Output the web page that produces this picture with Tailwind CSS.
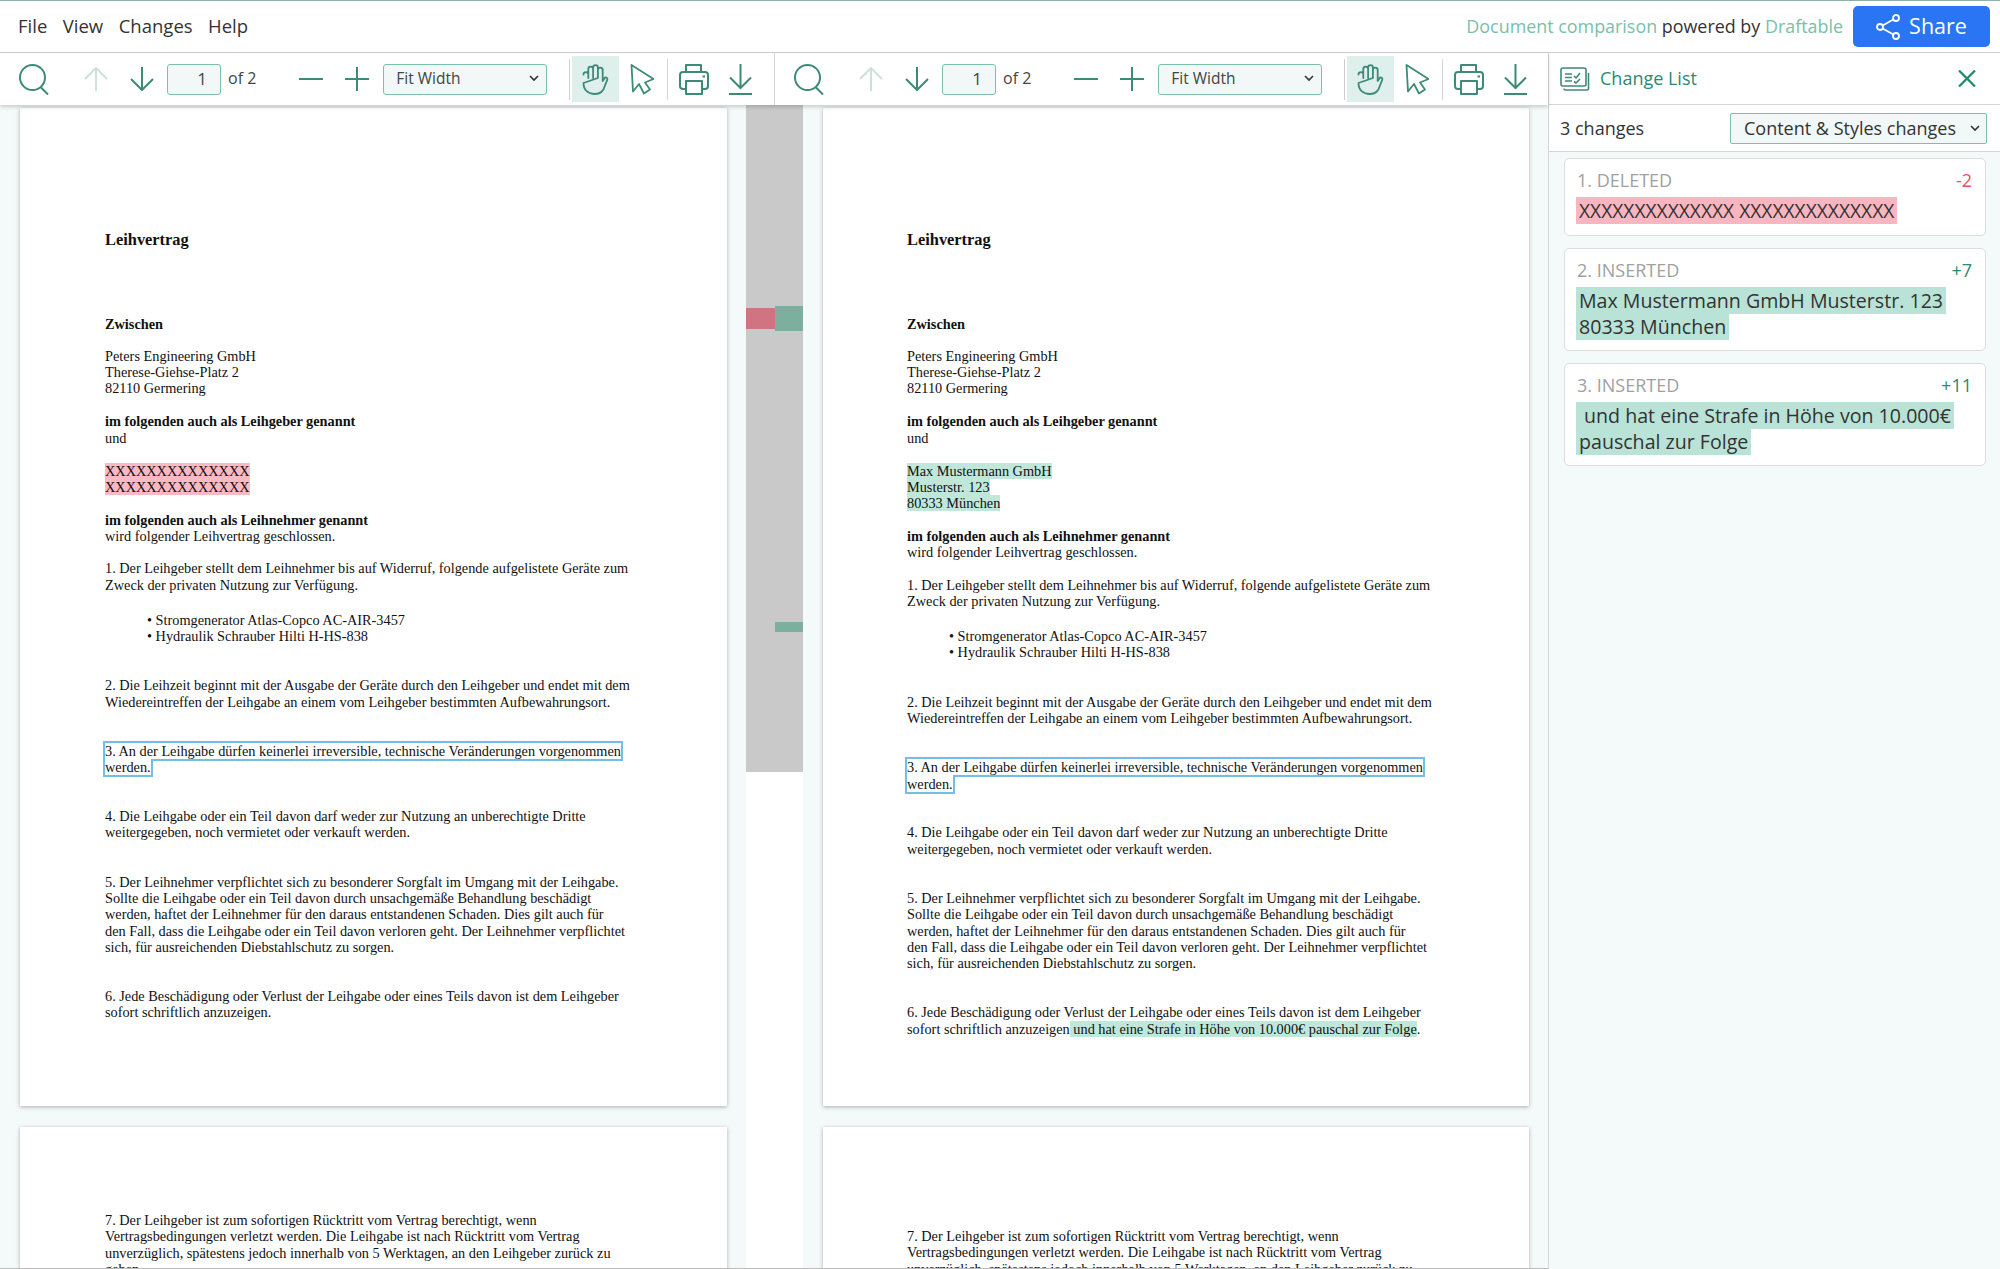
<!DOCTYPE html>
<html>
<head>
<meta charset="utf-8">
<title>Draftable</title>
<script src="https://cdn.jsdelivr.net/npm/@tailwindcss/browser@4"></script>
</head>
<body class="bg-white">
<div class="w-[2000px] h-[1269px] overflow-hidden flex flex-col font-['Open_Sans',sans-serif] text-[#333] border-t border-[#8fb0a8] relative">

  <!-- Menu bar -->
  <div class="h-[51px] shrink-0 flex items-center border-b border-[#cfcfcf] box-content pr-[10px]">
    <div class="flex gap-[15.5px] pl-[18px] pb-[1px] text-[18.5px]">
      <span>File</span><span>View</span><span>Changes</span><span>Help</span>
    </div>
    <div class="ml-auto text-[17.9px] mr-[10px]">
      <span class="text-[#79c0a9]">Document comparison</span> powered by <span class="text-[#79c0a9]">Draftable</span>
    </div>
    <button class="w-[137px] h-[41px] rounded-[5px] bg-[#2a75f3] text-white text-[21.5px] flex items-center justify-center gap-[9px]">
      <svg width="24" height="26" viewBox="0 0 24 26" fill="none" stroke="white" stroke-width="1.8"><circle cx="4" cy="13" r="3"/><circle cx="20" cy="4" r="3"/><circle cx="20" cy="22" r="3"/><path d="M6.6 11.5 17.4 5.5M6.6 14.5 17.4 20.5"/></svg>
      Share
    </button>
  </div>

  <div class="flex-1 flex min-h-0">
    <!-- Viewers -->
    <div class="w-[1549px] shrink-0 flex flex-col min-h-0 border-r border-[#d5d5d5]">
      <!-- Toolbars -->
      <div class="h-[52px] shrink-0 flex shadow-[0_2px_4px_rgba(0,0,0,0.18)] relative z-10 bg-white">
        <div class="w-[775px] shrink-0 border-r border-[#d5d5d5] flex items-center relative text-[#3d8a78]">
          <svg class="ml-[18px]" width="32" height="31" viewBox="0 0 32 31" fill="none" stroke="#3d8a78" stroke-width="2"><circle cx="14.5" cy="13.5" r="12.5"/><path d="M22.5 23 30 30.5"/></svg>
          <svg class="ml-[34px] opacity-25" width="24" height="24" viewBox="0 0 24 24" fill="none" stroke="#3d8a78" stroke-width="2"><path d="M12 24V1M1 12 12 1l11 11"/></svg>
          <svg class="ml-[22px]" width="24" height="24" viewBox="0 0 24 24" fill="none" stroke="#3d8a78" stroke-width="2"><path d="M12 0v23M1 12l11 11 11-11"/></svg>
          <div class="ml-[13px] w-[54px] h-[31px] border border-[#7cc0ab] rounded-[3px] bg-[#f1f8f7] text-[#444] text-[17px] text-right pr-[13px] leading-[27px]">1</div>
          <span class="ml-[7px] text-[16px] text-[#444] pb-[2px]">of 2</span>
          <svg class="ml-[43px]" width="24" height="24" viewBox="0 0 24 24" fill="none" stroke="#3d8a78" stroke-width="2"><path d="M0 12h24"/></svg>
          <svg class="ml-[22px]" width="24" height="24" viewBox="0 0 24 24" fill="none" stroke="#3d8a78" stroke-width="2"><path d="M0 12h24M12 0v24"/></svg>
          <div class="ml-[14px] w-[164px] h-[31px] border border-[#7cc0ab] rounded-[3px] bg-[#f1f8f7] text-[#444] text-[15.5px] pl-[12px] pb-[1px] flex items-center justify-between pr-[7px]">Fit Width
            <svg width="10" height="7" viewBox="0 0 10 7" fill="none" stroke="#333" stroke-width="1.6"><path d="M1 1l4 4 4-4"/></svg>
          </div>
          <div class="ml-[22px] w-px h-[41px] bg-[#cfcfcf]"></div>
          <div class="ml-[2px] w-[47px] h-[46px] bg-[#dff0ec] flex items-center justify-center">
            <svg width="27" height="31" viewBox="0 0 27 31" fill="none" stroke="#3d8a78" stroke-width="1.8" stroke-linejoin="round" stroke-linecap="round"><path d="M1.500 10.500a2.400 2.400 0 0 1 4.800 0V14M6.300 14V5a2.400 2.400 0 0 1 4.800 0v9M11.100 14V3.500a2.400 2.400 0 0 1 4.800 0V14M15.900 14V6a2.400 2.400 0 0 1 4.800 0v11l1.600-2.500c1.200-2 3.600-.6 3 1.200l-2.500 6.300C21.500 27 18.500 30 13 30 6 30 1.500 26 1.500 19z"/></svg>
          </div>
          <svg class="ml-[11px]" width="24" height="31" viewBox="0 0 24 31" fill="none" stroke="#3d8a78" stroke-width="1.8" stroke-linejoin="round"><path d="M1.500 1 3 27.500 9 20l5 9.500 6-4-5-7 8.500-3.500z"/></svg>
          <div class="ml-[13px] w-px h-[41px] bg-[#d5d5d5]"></div>
          <svg class="ml-[11px]" width="31" height="31" viewBox="0 0 31 31" fill="none" stroke="#3d8a78" stroke-width="2" stroke-linejoin="round"><path d="M7 8V1h15v7M7 25H4a3 3 0 0 1-3-3V11a3 3 0 0 1 3-3h22a3 3 0 0 1 3 3v11a3 3 0 0 1-3 3h-3"/><rect x="7" y="17" width="16" height="13"/><path d="M23.500 12.500h2.500"/></svg>
          <svg class="ml-[19px]" width="23" height="31" viewBox="0 0 23 31" fill="none" stroke="#3d8a78" stroke-width="2"><path d="M11.500 0v24M1 13.500l10.500 10.500 10.500-10.500"/><path d="M0 30h23" /></svg>
        </div>
        <div class="flex-1 flex items-center relative text-[#3d8a78]">
          <svg class="ml-[18px]" width="32" height="31" viewBox="0 0 32 31" fill="none" stroke="#3d8a78" stroke-width="2"><circle cx="14.5" cy="13.5" r="12.5"/><path d="M22.5 23 30 30.5"/></svg>
          <svg class="ml-[34px] opacity-25" width="24" height="24" viewBox="0 0 24 24" fill="none" stroke="#3d8a78" stroke-width="2"><path d="M12 24V1M1 12 12 1l11 11"/></svg>
          <svg class="ml-[22px]" width="24" height="24" viewBox="0 0 24 24" fill="none" stroke="#3d8a78" stroke-width="2"><path d="M12 0v23M1 12l11 11 11-11"/></svg>
          <div class="ml-[13px] w-[54px] h-[31px] border border-[#7cc0ab] rounded-[3px] bg-[#f1f8f7] text-[#444] text-[17px] text-right pr-[13px] leading-[27px]">1</div>
          <span class="ml-[7px] text-[16px] text-[#444] pb-[2px]">of 2</span>
          <svg class="ml-[43px]" width="24" height="24" viewBox="0 0 24 24" fill="none" stroke="#3d8a78" stroke-width="2"><path d="M0 12h24"/></svg>
          <svg class="ml-[22px]" width="24" height="24" viewBox="0 0 24 24" fill="none" stroke="#3d8a78" stroke-width="2"><path d="M0 12h24M12 0v24"/></svg>
          <div class="ml-[14px] w-[164px] h-[31px] border border-[#7cc0ab] rounded-[3px] bg-[#f1f8f7] text-[#444] text-[15.5px] pl-[12px] pb-[1px] flex items-center justify-between pr-[7px]">Fit Width
            <svg width="10" height="7" viewBox="0 0 10 7" fill="none" stroke="#333" stroke-width="1.6"><path d="M1 1l4 4 4-4"/></svg>
          </div>
          <div class="ml-[22px] w-px h-[41px] bg-[#cfcfcf]"></div>
          <div class="ml-[2px] w-[47px] h-[46px] bg-[#dff0ec] flex items-center justify-center">
            <svg width="27" height="31" viewBox="0 0 27 31" fill="none" stroke="#3d8a78" stroke-width="1.8" stroke-linejoin="round" stroke-linecap="round"><path d="M1.500 10.500a2.400 2.400 0 0 1 4.800 0V14M6.300 14V5a2.400 2.400 0 0 1 4.800 0v9M11.100 14V3.500a2.400 2.400 0 0 1 4.800 0V14M15.900 14V6a2.400 2.400 0 0 1 4.800 0v11l1.600-2.500c1.200-2 3.600-.6 3 1.200l-2.500 6.300C21.500 27 18.500 30 13 30 6 30 1.500 26 1.500 19z"/></svg>
          </div>
          <svg class="ml-[11px]" width="24" height="31" viewBox="0 0 24 31" fill="none" stroke="#3d8a78" stroke-width="1.8" stroke-linejoin="round"><path d="M1.500 1 3 27.500 9 20l5 9.500 6-4-5-7 8.500-3.500z"/></svg>
          <div class="ml-[13px] w-px h-[41px] bg-[#d5d5d5]"></div>
          <svg class="ml-[11px]" width="31" height="31" viewBox="0 0 31 31" fill="none" stroke="#3d8a78" stroke-width="2" stroke-linejoin="round"><path d="M7 8V1h15v7M7 25H4a3 3 0 0 1-3-3V11a3 3 0 0 1 3-3h22a3 3 0 0 1 3 3v11a3 3 0 0 1-3 3h-3"/><rect x="7" y="17" width="16" height="13"/><path d="M23.500 12.500h2.500"/></svg>
          <svg class="ml-[19px]" width="23" height="31" viewBox="0 0 23 31" fill="none" stroke="#3d8a78" stroke-width="2"><path d="M11.500 0v24M1 13.500l10.500 10.500 10.500-10.500"/><path d="M0 30h23" /></svg>
        </div>
      </div>

      <!-- Documents and change map -->
      <div class="flex-1 flex min-h-0 border-b border-[#bbb] overflow-hidden font-['Liberation_Serif',serif] text-[14.3px] leading-[16.3px] text-[#111]">
        <!-- Left document -->
        <div class="w-[746px] shrink-0 bg-[#f4f9f9] pl-[20px] pt-[3px]">
          <div class="w-[707px] h-[998px] bg-white shadow-[0_1px_4px_rgba(0,0,0,0.3)] pl-[85px] pt-[124px] whitespace-nowrap">
            <p class="font-bold text-[16.4px]">Leihvertrag</p>
            <p class="mt-[68px] font-bold">Zwischen</p>
            <p class="mt-[15px]">Peters Engineering GmbH<br>Therese-Giehse-Platz 2<br>82110 Germering</p>
            <p class="mt-[17px] font-bold">im folgenden auch als Leihgeber genannt</p>
            <p>und</p>
            <p class="mt-[16.5px]"><span class="bg-[#fbb9c3]">XXXXXXXXXXXXXX</span><br><span class="bg-[#fbb9c3]">XXXXXXXXXXXXXX</span></p>
            <p class="mt-[16.5px] font-bold">im folgenden auch als Leihnehmer genannt</p>
            <p>wird folgender Leihvertrag geschlossen.</p>
            <p class="mt-4">1. Der Leihgeber stellt dem Leihnehmer bis auf Widerruf, folgende aufgelistete Geräte zum<br>Zweck der privaten Nutzung zur Verfügung.</p>
            <p class="mt-[19px] pl-[42px]">• Stromgenerator Atlas-Copco AC-AIR-3457<br>• Hydraulik Schrauber Hilti H-HS-838</p>
            <p class="mt-[33px]">2. Die Leihzeit beginnt mit der Ausgabe der Geräte durch den Leihgeber und endet mit dem<br>Wiedereintreffen der Leihgabe an einem vom Leihgeber bestimmten Aufbewahrungsort.</p>
            <p class="mt-[33px]"><span class="outline-2 outline-[#70bfe6]">3. An der Leihgabe dürfen keinerlei irreversible, technische Veränderungen vorgenommen<br>werden.</span></p>
            <p class="mt-[32.4px]">4. Die Leihgabe oder ein Teil davon darf weder zur Nutzung an unberechtigte Dritte<br>weitergegeben, noch vermietet oder verkauft werden.</p>
            <p class="mt-[33px]">5. Der Leihnehmer verpflichtet sich zu besonderer Sorgfalt im Umgang mit der Leihgabe.<br>Sollte die Leihgabe oder ein Teil davon durch unsachgemäße Behandlung beschädigt<br>werden, haftet der Leihnehmer für den daraus entstandenen Schaden. Dies gilt auch für<br>den Fall, dass die Leihgabe oder ein Teil davon verloren geht. Der Leihnehmer verpflichtet<br>sich, für ausreichenden Diebstahlschutz zu sorgen.</p>
            <p class="mt-[33px]">6. Jede Beschädigung oder Verlust der Leihgabe oder eines Teils davon ist dem Leihgeber<br>sofort schriftlich anzuzeigen.</p>
          </div>
          <div class="w-[707px] h-[400px] mt-[21px] bg-white shadow-[0_1px_4px_rgba(0,0,0,0.3)] pl-[85px] pt-[85px] whitespace-nowrap">
            <p>7. Der Leihgeber ist zum sofortigen Rücktritt vom Vertrag berechtigt, wenn<br>Vertragsbedingungen verletzt werden. Die Leihgabe ist nach Rücktritt vom Vertrag<br>unverzüglich, spätestens jedoch innerhalb von 5 Werktagen, an den Leihgeber zurück zu<br>geben.</p>
          </div>
        </div>

        <!-- Change map -->
        <div class="w-[57px] shrink-0 bg-white">
          <div class="h-[667px] bg-[#c9c9c9] relative">
            <div class="absolute left-0 top-[203px] w-[29px] h-[21px] bg-[#cf7480]"></div>
            <div class="absolute left-[29px] top-[201px] w-[28px] h-[25px] bg-[#7daf9f]"></div>
            <div class="absolute left-[29px] top-[517px] w-[28px] h-[10px] bg-[#7daf9f]"></div>
          </div>
        </div>

        <!-- Right document -->
        <div class="flex-1 bg-[#f4f9f9] pl-[20px] pt-[3px]">
          <div class="w-[706px] h-[998px] bg-white shadow-[0_1px_4px_rgba(0,0,0,0.3)] pl-[84px] pt-[124px] whitespace-nowrap">
            <p class="font-bold text-[16.4px]">Leihvertrag</p>
            <p class="mt-[68px] font-bold">Zwischen</p>
            <p class="mt-[15px]">Peters Engineering GmbH<br>Therese-Giehse-Platz 2<br>82110 Germering</p>
            <p class="mt-[17px] font-bold">im folgenden auch als Leihgeber genannt</p>
            <p>und</p>
            <p class="mt-[16.5px]"><span class="bg-[#bfe8da]">Max Mustermann GmbH</span><br><span class="bg-[#bfe8da]">Musterstr. 123</span><br><span class="bg-[#bfe8da]">80333 München</span></p>
            <p class="mt-[16.5px] font-bold">im folgenden auch als Leihnehmer genannt</p>
            <p>wird folgender Leihvertrag geschlossen.</p>
            <p class="mt-4">1. Der Leihgeber stellt dem Leihnehmer bis auf Widerruf, folgende aufgelistete Geräte zum<br>Zweck der privaten Nutzung zur Verfügung.</p>
            <p class="mt-[19px] pl-[42px]">• Stromgenerator Atlas-Copco AC-AIR-3457<br>• Hydraulik Schrauber Hilti H-HS-838</p>
            <p class="mt-[33px]">2. Die Leihzeit beginnt mit der Ausgabe der Geräte durch den Leihgeber und endet mit dem<br>Wiedereintreffen der Leihgabe an einem vom Leihgeber bestimmten Aufbewahrungsort.</p>
            <p class="mt-[33px]"><span class="outline-2 outline-[#70bfe6]">3. An der Leihgabe dürfen keinerlei irreversible, technische Veränderungen vorgenommen<br>werden.</span></p>
            <p class="mt-[32.4px]">4. Die Leihgabe oder ein Teil davon darf weder zur Nutzung an unberechtigte Dritte<br>weitergegeben, noch vermietet oder verkauft werden.</p>
            <p class="mt-[33px]">5. Der Leihnehmer verpflichtet sich zu besonderer Sorgfalt im Umgang mit der Leihgabe.<br>Sollte die Leihgabe oder ein Teil davon durch unsachgemäße Behandlung beschädigt<br>werden, haftet der Leihnehmer für den daraus entstandenen Schaden. Dies gilt auch für<br>den Fall, dass die Leihgabe oder ein Teil davon verloren geht. Der Leihnehmer verpflichtet<br>sich, für ausreichenden Diebstahlschutz zu sorgen.</p>
            <p class="mt-[33px]">6. Jede Beschädigung oder Verlust der Leihgabe oder eines Teils davon ist dem Leihgeber<br>sofort schriftlich anzuzeigen<span class="bg-[#bfe8da]"> und hat eine Strafe in Höhe von 10.000€ pauschal zur Folge</span>.</p>
          </div>
          <div class="w-[706px] h-[400px] mt-[21px] bg-white shadow-[0_1px_4px_rgba(0,0,0,0.3)] pl-[84px] pt-[101px] whitespace-nowrap">
            <p>7. Der Leihgeber ist zum sofortigen Rücktritt vom Vertrag berechtigt, wenn<br>Vertragsbedingungen verletzt werden. Die Leihgabe ist nach Rücktritt vom Vertrag<br>unverzüglich, spätestens jedoch innerhalb von 5 Werktagen, an den Leihgeber zurück zu<br>geben.</p>
          </div>
        </div>
      </div>
    </div>

    <!-- Change list -->
    <div class="flex-1 flex flex-col bg-[#f4f9f9] min-w-0">
      <div class="h-[52px] shrink-0 bg-white border-b border-[#d5d5d5] flex items-center pl-[11px] pr-[24px]">
        <svg width="30" height="24" viewBox="0 0 30 24" fill="none" stroke="#3d8a78" stroke-width="1.6" stroke-linejoin="round"><rect x="1" y="1" width="25" height="18" rx="2"/><path d="M4 21.500c0 1 .5 1.500 1.500 1.500H27c1 0 1.500-.5 1.500-1.500V6"/><path d="M5 7h7M5 10.500h7M5 14h7M14 9l2 2 4-5M14 14.500l2 1.500 4-4" /></svg>
        <span class="ml-[10px] text-[18px] text-[#2a8a72]">Change List</span>
        <svg class="ml-auto" width="18" height="17" viewBox="0 0 18 17" fill="none" stroke="#1f8a70" stroke-width="2.200"><path d="M1 .5l16 16M17 .5l-16 16"/></svg>
      </div>
      <div class="h-[47px] shrink-0 bg-white border-b border-[#d5d5d5] flex items-center pl-[11px] pr-[13px] text-[18px]">
        <span>3 changes</span>
        <div class="ml-auto w-[257px] h-[31px] border border-[#7cc0ab] rounded-[2px] bg-[#f1f8f7] pl-[13px] pr-[6px] flex items-center justify-between">
          Content &amp; Styles changes
          <svg width="10" height="7" viewBox="0 0 10 7" fill="none" stroke="#333" stroke-width="1.6"><path d="M1 1l4 4 4-4"/></svg>
        </div>
      </div>
      <div class="pl-[15px] pr-[14px] pt-[6px] flex flex-col gap-[12px]">
        <div class="h-[78px] bg-white border border-[#ddd] rounded-[5px] pl-[11px] pr-[11px] pt-[8px]">
          <div class="flex justify-between pl-[1px] pr-[2px] text-[18px] leading-[26px] text-[#a0a0a0]"><span>1. DELETED</span><span class="text-[#e2506e]">-2</span></div>
          <div class="text-[19.2px] leading-[26px] mt-[5px] text-[#333]"><span class="bg-[#fab6c0] px-[3px] box-decoration-clone">XXXXXXXXXXXXXX XXXXXXXXXXXXXX</span></div>
        </div>
        <div class="h-[103px] bg-white border border-[#ddd] rounded-[5px] px-[11px] pt-[8px]">
          <div class="flex justify-between pl-[1px] pr-[2px] text-[18px] leading-[26px] text-[#a0a0a0]"><span>2. INSERTED</span><span class="text-[#2a8a72]">+7</span></div>
          <div class="text-[19.6px] leading-[26px] mt-[5px] text-[#333]"><span class="bg-[#b9e3d6] px-[3px] box-decoration-clone">Max Mustermann GmbH Musterstr. 123 80333 München</span></div>
        </div>
        <div class="h-[103px] bg-white border border-[#ddd] rounded-[5px] px-[11px] pt-[8px]">
          <div class="flex justify-between pl-[1px] pr-[2px] text-[18px] leading-[26px] text-[#a0a0a0]"><span>3. INSERTED</span><span class="text-[#2a8a72]">+11</span></div>
          <div class="text-[19.6px] leading-[26px] mt-[5px] text-[#333]"><span class="bg-[#b9e3d6] px-[3px] box-decoration-clone">&nbsp;und hat eine Strafe in Höhe von 10.000€ pauschal zur Folge</span></div>
        </div>
      </div>
    </div>
  </div>
</div>
</body>
</html>
